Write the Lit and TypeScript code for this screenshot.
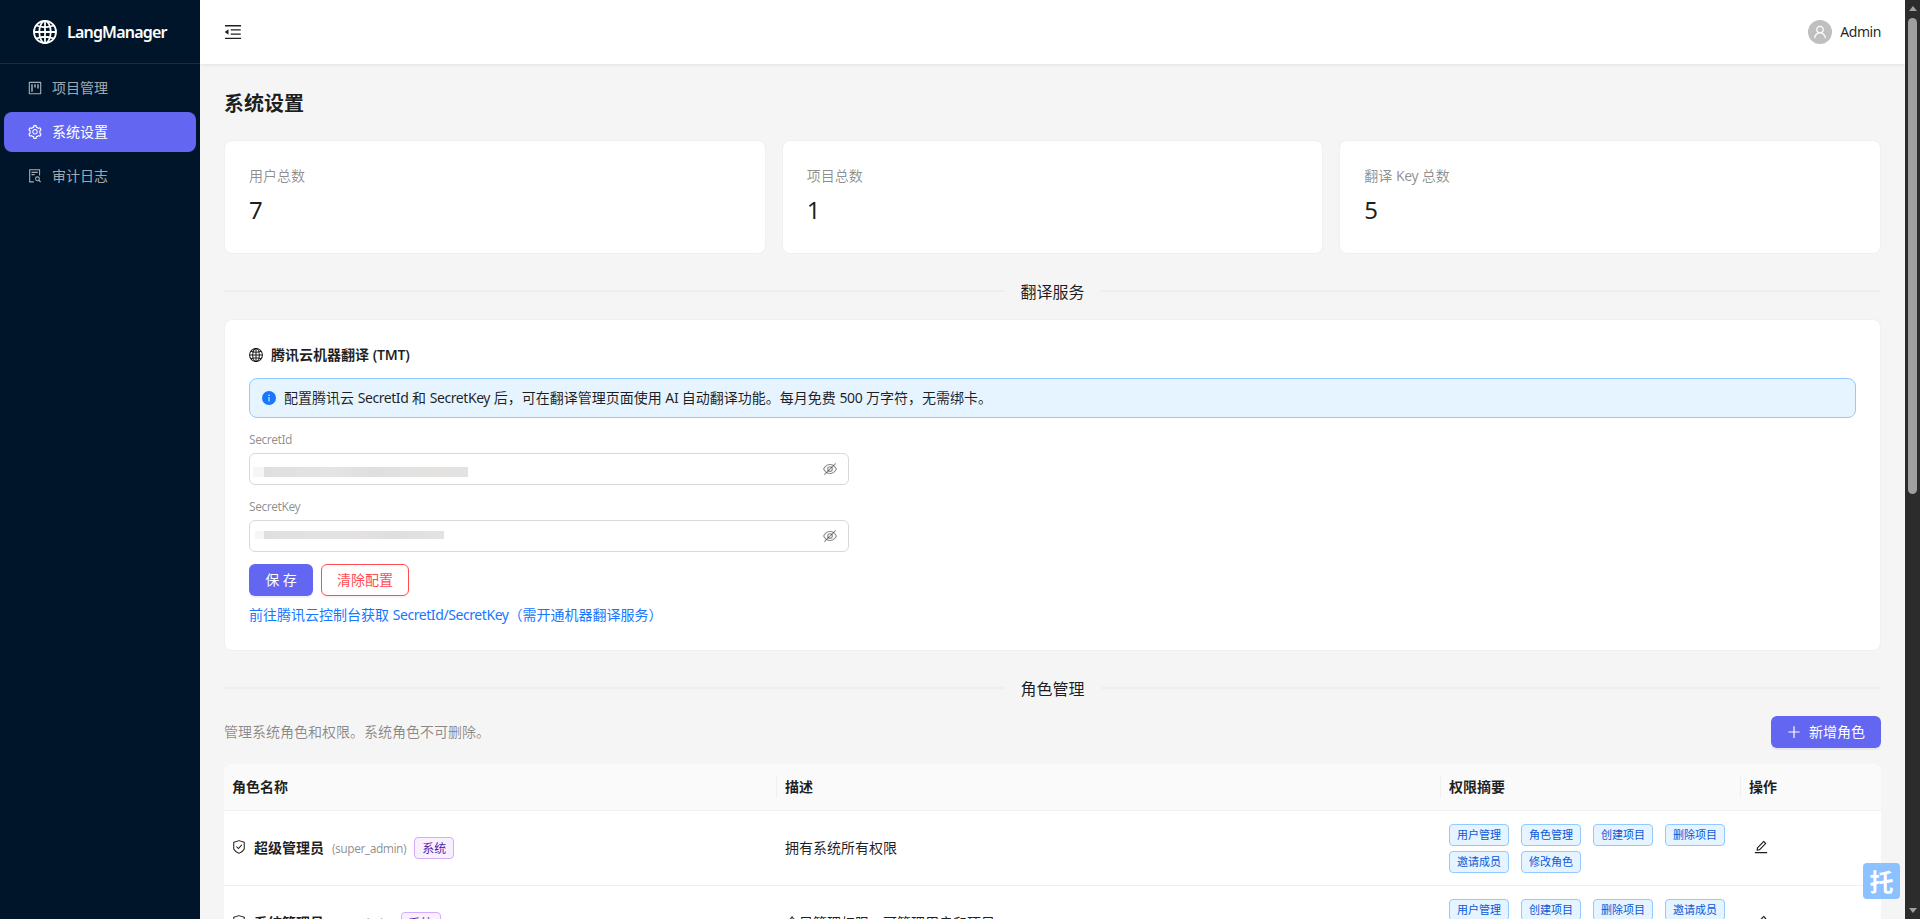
import { LitElement, html, css, svg } from "lit";
import { customElement, property } from "lit/decorators.js";

const filled = (d: string) => svg`<path fill="currentColor" d=${d}></path>`;

const icons: Record<string, unknown> = {
  fold: filled("M408 442h480c4.400 0 8-3.600 8-8v-56c0-4.400-3.600-8-8-8H408c-4.400 0-8 3.600-8 8v56c0 4.400 3.600 8 8 8zm-8 204c0 4.400 3.600 8 8 8h480c4.400 0 8-3.600 8-8v-56c0-4.400-3.600-8-8-8H408c-4.400 0-8 3.600-8 8v56zm504-486H120c-4.400 0-8 3.600-8 8v56c0 4.400 3.600 8 8 8h784c4.400 0 8-3.600 8-8v-56c0-4.400-3.600-8-8-8zm0 632H120c-4.400 0-8 3.600-8 8v56c0 4.400 3.600 8 8 8h784c4.400 0 8-3.600 8-8v-56c0-4.400-3.600-8-8-8zM115.400 518.900L271.700 642c5.800 4.600 14.400.5 14.400-6.900V388.900c0-7.400-8.500-11.500-14.400-6.900L115.400 505.100a8.740 8.740 0 000 13.800z"),
  project: filled("M280 752h80c4.400 0 8-3.600 8-8V280c0-4.400-3.600-8-8-8h-80c-4.400 0-8 3.600-8 8v464c0 4.400 3.600 8 8 8zm192-280h80c4.400 0 8-3.600 8-8V280c0-4.400-3.600-8-8-8h-80c-4.400 0-8 3.600-8 8v184c0 4.400 3.600 8 8 8zm192 72h80c4.400 0 8-3.600 8-8V280c0-4.400-3.600-8-8-8h-80c-4.400 0-8 3.600-8 8v256c0 4.400 3.600 8 8 8zm216-432H144c-17.700 0-32 14.300-32 32v736c0 17.700 14.300 32 32 32h736c17.700 0 32-14.300 32-32V144c0-17.700-14.300-32-32-32zm-40 728H184V184h656v656z"),
  setting: filled("M924.8 625.7l-65.5-56c3.1-19 4.7-38.4 4.7-57.8s-1.6-38.8-4.7-57.8l65.5-56a32.03 32.03 0 009.3-35.2l-.9-2.6a443.74 443.74 0 00-79.7-137.9l-1.8-2.1a32.12 32.12 0 00-35.1-9.5l-81.3 28.9c-30-24.6-63.5-44-99.7-57.6l-15.7-85a32.05 32.05 0 00-25.8-25.7l-2.7-.5c-52.1-9.4-106.9-9.4-159 0l-2.7.5a32.05 32.05 0 00-25.8 25.7l-15.8 85.4a351.86 351.86 0 00-99 57.4l-81.9-29.1a32 32 0 00-35.1 9.5l-1.8 2.1a446.02 446.02 0 00-79.7 137.9l-.9 2.6c-4.5 12.5-.8 26.5 9.3 35.2l66.3 56.6c-3.1 18.8-4.6 38-4.600 57.100 0 19.200 1.500 38.400 4.600 57.100L99 625.500a32.030 32.030 0 00-9.300 35.200l.9 2.600c18.100 50.400 44.900 96.900 79.700 137.900l1.800 2.100a32.120 32.120 0 0035.100 9.500l81.900-29.100c29.800 24.500 63.100 43.900 99 57.400l15.800 85.400a32.050 32.050 0 0025.800 25.700l2.700.5a449.400 449.400 0 00159 0l2.700-.5a32.050 32.050 0 0025.800-25.700l15.700-85a350 350 0 0099.700-57.600l81.300 28.900a32 32 0 0035.100-9.500l1.800-2.100c34.800-41.100 61.600-87.500 79.700-137.900l.9-2.600c4.500-12.300.8-26.300-9.300-35zM788.300 465.900c2.500 15.100 3.800 30.600 3.800 46.100s-1.300 31-3.800 46.100l-6.600 40.100 74.700 63.900a370.030 370.030 0 01-42.600 73.600L721 702.800l-31.400 25.800c-23.900 19.600-50.500 35-79.300 45.800l-38.100 14.300-17.900 97a377.500 377.500 0 01-85 0l-17.900-97.200-37.800-14.500c-28.500-10.800-55-26.200-78.700-45.700l-31.400-25.900-93.400 33.200c-17-22.900-31.200-47.600-42.600-73.600l75.500-64.500-6.500-40c-2.400-14.900-3.700-30.300-3.700-45.500 0-15.300 1.200-30.600 3.700-45.500l6.500-40-75.500-64.500c11.300-26.100 25.600-50.700 42.600-73.600l93.400 33.200 31.400-25.900c23.700-19.500 50.200-34.900 78.700-45.700l37.900-14.300 17.900-97.200c28.100-3.200 56.800-3.200 85 0l17.900 97 38.100 14.300c28.700 10.800 55.400 26.200 79.300 45.800l31.400 25.800 92.800-32.900c17 22.900 31.200 47.600 42.600 73.600L781.800 426l6.500 39.900zM512 326c-97.200 0-176 78.800-176 176s78.800 176 176 176 176-78.800 176-176-78.800-176-176-176zm79.200 255.200A111.600 111.600 0 01512 614c-29.900 0-58-11.700-79.200-32.800A111.600 111.600 0 01400 502c0-29.900 11.700-58 32.800-79.200C454 401.600 482.100 390 512 390c29.900 0 58 11.600 79.200 32.800A111.600 111.600 0 01624 502c0 29.900-11.700 58-32.800 79.200z"),
  user: filled("M858.500 763.600a374 374 0 00-80.600-119.500 375.630 375.630 0 00-119.500-80.600c-.4-.2-.8-.3-1.200-.5C719.500 518 760 444.700 760 362c0-137-111-248-248-248S264 225 264 362c0 82.700 40.500 156 102.800 201.100-.4.2-.8.3-1.200.5-44.800 18.900-85 46-119.500 80.600a375.630 375.630 0 00-80.600 119.500A371.700 371.700 0 00136 901.800a8 8 0 008 8.200h60c4.400 0 7.900-3.500 8-7.800 2-77.200 33-149.500 87.800-204.300 56.700-56.700 132-87.900 212.200-87.900s155.500 31.200 212.200 87.900C779 752.700 810 825 812 902.200c.1 4.400 3.600 7.800 8 7.800h60a8 8 0 008-8.200c-1-47.800-10.900-94.300-29.500-138.200zM512 534c-45.900 0-89.100-17.900-121.600-50.400S340 407.900 340 362c0-45.900 17.900-89.100 50.400-121.600S466.100 190 512 190s89.100 17.900 121.600 50.400S684 316.100 684 362c0 45.900-17.900 89.100-50.400 121.600S557.900 534 512 534z"),
  edit: filled("M257.700 752c2 0 4-.2 6-.5L431.900 722c2-.4 3.900-1.300 5.300-2.800l423.900-423.900a9.960 9.960 0 000-14.100L694.900 114.900c-1.900-1.900-4.400-2.900-7.100-2.900s-5.200 1-7.100 2.900L256.800 538.800c-1.500 1.500-2.400 3.300-2.800 5.300l-29.500 168.200a33.500 33.500 0 009.400 29.800c6.600 6.400 14.900 9.900 23.800 9.900zm67.400-174.400L687.800 215l73.300 73.300-362.700 362.600-88.900 15.700 15.600-89zM880 836H144c-17.700 0-32 14.300-32 32v36c0 4.400 3.600 8 8 8h784c4.400 0 8-3.600 8-8v-36c0-17.700-14.300-32-32-32z"),
  audit: svg`<g fill="none" stroke="currentColor" stroke-width="70">
    <path d="M440 888H172V112h632v364M288 282h400M288 426h200"></path>
    <circle cx="668" cy="692" r="124"></circle><path d="M752 784l122 122"></path></g>`,
  globe: svg`<g fill="none" stroke="currentColor" stroke-width="66">
    <circle cx="512" cy="512" r="412"></circle>
    <ellipse cx="512" cy="512" rx="212" ry="412"></ellipse>
    <path d="M512 100v824M100 512h824M190 270q322 130 644 0M190 754q322-130 644 0"></path></g>`,
  eye: svg`<g fill="none" stroke="currentColor" stroke-width="68">
    <path d="M102 512Q250 222 512 222T922 512Q774 802 512 802T102 512Z"></path>
    <circle cx="512" cy="512" r="150"></circle><path d="M150 878L878 150"></path></g>`,
  info: svg`<circle cx="512" cy="512" r="448" fill="currentColor"></circle>
    <path d="M480 448h64v288h-64z" fill="#fff"></path><circle cx="512" cy="336" r="48" fill="#fff"></circle>`,
  plus: svg`<path d="M512 136v752M152 512h720" stroke="currentColor" stroke-width="76"></path>`,
  shield: svg`<g fill="none" stroke="currentColor" stroke-width="66">
    <path d="M512 104L848 204V640Q790 780 512 920Q234 780 176 640V204Z" stroke-linejoin="round"></path>
    <path d="M345 480L475 612L690 380"></path></g>`,
};

@customElement("ui-icon")
export class UiIcon extends LitElement {
  @property() name = "";
  static styles = css`
    :host { display: inline-flex; flex: none; width: 14px; height: 14px; }
    svg { width: 100%; height: 100%; display: block; }
  `;
  render() {
    return html`<svg viewBox="64 64 896 896" aria-hidden="true">${icons[this.name]}</svg>`;
  }
}

const stats = [
  { label: html`用户总数`, value: "7" },
  { label: html`项目总数`, value: "1" },
  { label: html`翻译 <span class="en">Key</span> 总数`, value: "5" },
];

const menu = [
  { icon: "project", label: "项目管理" },
  { icon: "setting", label: "系统设置", active: true },
  { icon: "audit", label: "审计日志" },
];

const roles = [
  {
    name: "超级管理员", code: "(super_admin)", desc: "拥有系统所有权限",
    perms: ["用户管理", "角色管理", "创建项目", "删除项目", "邀请成员", "修改角色"],
  },
  {
    name: "系统管理员", code: "(sys_admin)", desc: "全局管理权限，可管理用户和项目",
    perms: ["用户管理", "创建项目", "删除项目", "邀请成员", "修改角色"],
  },
];

@customElement("app-root")
export class AppRoot extends LitElement {
  static styles = css`
    :host {
      display: grid;
      grid-template-columns: 200px minmax(0, 1fr) 15px;
      height: 919px;
      position: relative;
      overflow: hidden;
      background: #f5f5f5;
      color: rgba(0, 0, 0, 0.88);
      font: 14px/22px "Noto Sans", "Noto Sans CJK SC", sans-serif;
    }
    * { box-sizing: border-box; }
    .en { letter-spacing: -0.42px; }

    aside { background: #001529; color: rgba(255, 255, 255, 0.65); }
    .brand {
      height: 64px;
      display: flex;
      align-items: center;
      gap: 10px;
      padding-left: 33px;
      border-bottom: 1px solid rgba(255, 255, 255, 0.1);
      color: #fff;
    }
    .brand ui-icon { width: 24px; height: 24px; }
    .brand strong { font-size: 16px; font-weight: 600; letter-spacing: -0.8px; padding-top: 1px; }
    nav { display: grid; gap: 4px; padding: 4px; }
    .item {
      height: 40px;
      display: flex;
      align-items: center;
      gap: 10px;
      padding-left: 24px;
      border-radius: 8px;
    }
    .item.active { background: #6366f1; color: #fff; }

    main { display: flex; flex-direction: column; min-width: 0; overflow: hidden; }
    header {
      flex: none;
      height: 64px;
      display: flex;
      align-items: center;
      justify-content: space-between;
      padding: 0 24px;
      background: #fff;
      box-shadow: 0 1px 4px rgba(0, 0, 0, 0.08);
    }
    .fold { width: 18px; height: 18px; }
    .me { display: flex; align-items: center; gap: 8px; }
    .avatar {
      width: 24px; height: 24px;
      border-radius: 50%;
      background: #bfbfbf;
      color: #fff;
      display: grid;
      place-items: center;
    }
    .page { flex: none; padding: 26px 24px 24px; }
    h1 { margin: 0 0 22px; font-size: 20px; line-height: 28px; font-weight: 700; }
    .stats { display: grid; grid-template-columns: repeat(3, 1fr); gap: 16px; }
    .card { background: #fff; border: 1px solid #f0f0f0; border-radius: 8px; padding: 24px; }
    .label { color: rgba(0, 0, 0, 0.45); }
    .value { margin-top: 4px; font-size: 24px; line-height: 38px; letter-spacing: -0.5px; }

    .divider { display: flex; align-items: center; gap: 16px; font-size: 16px; line-height: 24px; }
    .divider span { padding-top: 1px; margin-bottom: -1px; }
    .divider::before, .divider::after { content: ""; flex: 1; height: 2px; background: #eeeeee; }
    .d1, .d2 { height: 24px; margin: 25px 0 16px; }

    .tmt { height: 332px; }
    .tmt-title { display: flex; align-items: center; gap: 8px; font-weight: 600; }
    .tmt-title .en { letter-spacing: -0.2px; }
    .alert {
      height: 40px;
      margin: 12px 0 11px;
      padding: 0 12px;
      display: flex;
      align-items: center;
      gap: 8px;
      background: #e6f4ff;
      border: 1px solid #91caff;
      border-radius: 8px;
    }
    .alert ui-icon { color: #1677ff; }
    .field-label { font-size: 12px; line-height: 22px; color: rgba(0, 0, 0, 0.45); }
    .field {
      width: 600px;
      height: 32px;
      margin: 2px 0 11px;
      padding: 0 11px 0 3px;
      display: flex;
      align-items: center;
      border: 1px solid #d9d9d9;
      border-radius: 6px;
      background: #fff;
      color: rgba(0, 0, 0, 0.45);
    }
    .field ui-icon { margin-left: auto; }
    .mask {
      height: 10px;
      width: 215px;
      margin-top: 5px;
      background: linear-gradient(90deg, #f7f6f5 11px, #dfdfdf 11px, #e4e4e5 80px, #dfdfdf 120px, #e2e2e2 150px, #e4e2e1 195px, #e2e3e5 205px);
    }
    .mask.short { width: 189px; height: 8px; margin: -3px 0 0 2px; background: linear-gradient(90deg, #f7f6f5 9px, #dfdfdf 9px, #e3e3e4 70px, #e4e2e1 100px, #dfdfdf 140px, #e3e3e4); }
    .actions { display: flex; gap: 8px; margin: 12px 0 8px; }
    .btn {
      height: 32px;
      display: inline-flex;
      align-items: center;
      justify-content: center;
      border-radius: 6px;
      font: inherit;
      padding: 0;
      border: 0;
    }
    .primary { background: #6366f1; color: #fff; box-shadow: 0 2px 0 rgba(99, 102, 241, 0.1); }
    .save { width: 64px; white-space: pre; }
    .danger { width: 88px; border: 1px solid #ff4d4f; color: #ff4d4f; background: #fff; box-shadow: 0 2px 0 rgba(255, 38, 5, 0.06); }
    .link { color: #1677ff; }

    .bar { display: flex; align-items: center; justify-content: space-between; margin-bottom: 16px; }
    .add { width: 110px; gap: 8px; }

    .table { background: #fff; border-radius: 8px 8px 0 0; overflow: hidden; }
    .row {
      display: grid;
      grid-template-columns: 553px 664px 300px 1fr;
      align-items: center;
      height: 75px;
      border-bottom: 1px solid #f0f0f0;
    }
    .row > div { padding-left: 8px; }
    .head { height: 47px; background: #fafafa; font-weight: 600; }
    .head > div:not(:last-child) { border-right: 1px solid #f0f0f0; height: 22px; }
    .role { display: flex; align-items: center; gap: 8px; }
    .role ui-icon { margin-bottom: 2px; }
    .role strong { font-weight: 600; }
    .code { font-size: 12px; color: rgba(0, 0, 0, 0.45); letter-spacing: -0.5px; padding-top: 2px; }
    .tag { height: 22px; border: 1px solid #91caff; background: #e6f4ff; color: #0958d9; border-radius: 4px; padding: 0 7px; font-size: 11px; line-height: 20px; }
    .tag.sys { border-color: #d3adf7; background: #f9f0ff; color: #531dab; font-size: 12px; line-height: 22px; }
    .perms { display: flex; flex-wrap: wrap; gap: 5px 12px; }
    .row > .op { padding: 0 0 2px 13px; display: flex; }

    .scroll { background: #2c2c2c; display: flex; flex-direction: column; align-items: center; padding: 6px 0; }
    .up, .down { border: 4.5px solid transparent; width: 0; height: 0; }
    .up { border-top: 0; border-bottom: 5px solid #a0a0a0; }
    .down { border-bottom: 0; border-top: 5px solid #a0a0a0; margin-top: auto; }
    .thumb { width: 9px; height: 476px; margin-top: 7px; border-radius: 5px; background: #9f9f9f; }
    .float {
      position: absolute;
      right: 20px;
      bottom: 20px;
      width: 37px;
      height: 36px;
      border-radius: 4px;
      background: rgba(123, 186, 255, 0.88);
      color: #fff;
      font-size: 24px;
      font-weight: 700;
      line-height: 38px;
      text-align: center;
    }
  `;

  render() {
    return html`
      <aside>
        <div class="brand"><ui-icon name="globe"></ui-icon><strong>LangManager</strong></div>
        <nav>
          ${menu.map((m) => html`<div class="item ${m.active ? "active" : ""}"><ui-icon name=${m.icon}></ui-icon><span>${m.label}</span></div>`)}
        </nav>
      </aside>
      <main>
        <header>
          <ui-icon class="fold" name="fold"></ui-icon>
          <div class="me"><span class="avatar"><ui-icon name="user"></ui-icon></span><span class="en">Admin</span></div>
        </header>
        <div class="page">
          <h1>系统设置</h1>
          <div class="stats">
            ${stats.map((s) => html`<div class="card"><div class="label">${s.label}</div><div class="value">${s.value}</div></div>`)}
          </div>
          <div class="divider d1"><span>翻译服务</span></div>
          <section class="card tmt">
            <div class="tmt-title"><ui-icon name="globe"></ui-icon><span>腾讯云机器翻译 <span class="en">(TMT)</span></span></div>
            <div class="alert"><ui-icon name="info"></ui-icon><span>配置腾讯云 <span class="en">SecretId</span> 和 <span class="en">SecretKey</span> 后，可在翻译管理页面使用 <span class="en">AI</span> 自动翻译功能。每月免费 <span class="en">500</span> 万字符，无需绑卡。</span></div>
            <div class="field-label en">SecretId</div>
            <div class="field"><span class="mask"></span><ui-icon name="eye"></ui-icon></div>
            <div class="field-label en">SecretKey</div>
            <div class="field"><span class="mask short"></span><ui-icon name="eye"></ui-icon></div>
            <div class="actions">
              <button class="btn primary save">保 存</button>
              <button class="btn danger">清除配置</button>
            </div>
            <a class="link">前往腾讯云控制台获取 <span class="en">SecretId/SecretKey</span>（需开通机器翻译服务）</a>
          </section>
          <div class="divider d2"><span>角色管理</span></div>
          <div class="bar">
            <span class="label">管理系统角色和权限。系统角色不可删除。</span>
            <button class="btn primary add"><ui-icon name="plus"></ui-icon>新增角色</button>
          </div>
          <div class="table">
            <div class="row head"><div>角色名称</div><div>描述</div><div>权限摘要</div><div>操作</div></div>
            ${roles.map((r) => html`<div class="row">
              <div class="role"><ui-icon name="shield"></ui-icon><strong>${r.name}</strong><span class="code">${r.code}</span><span class="tag sys">系统</span></div>
              <div>${r.desc}</div>
              <div class="perms">${r.perms.map((p) => html`<span class="tag">${p}</span>`)}</div>
              <div class="op"><ui-icon name="edit"></ui-icon></div>
            </div>`)}
          </div>
        </div>
      </main>
      <div class="scroll"><i class="up"></i><i class="thumb"></i><i class="down"></i></div>
      <div class="float">托</div>
    `;
  }
}
